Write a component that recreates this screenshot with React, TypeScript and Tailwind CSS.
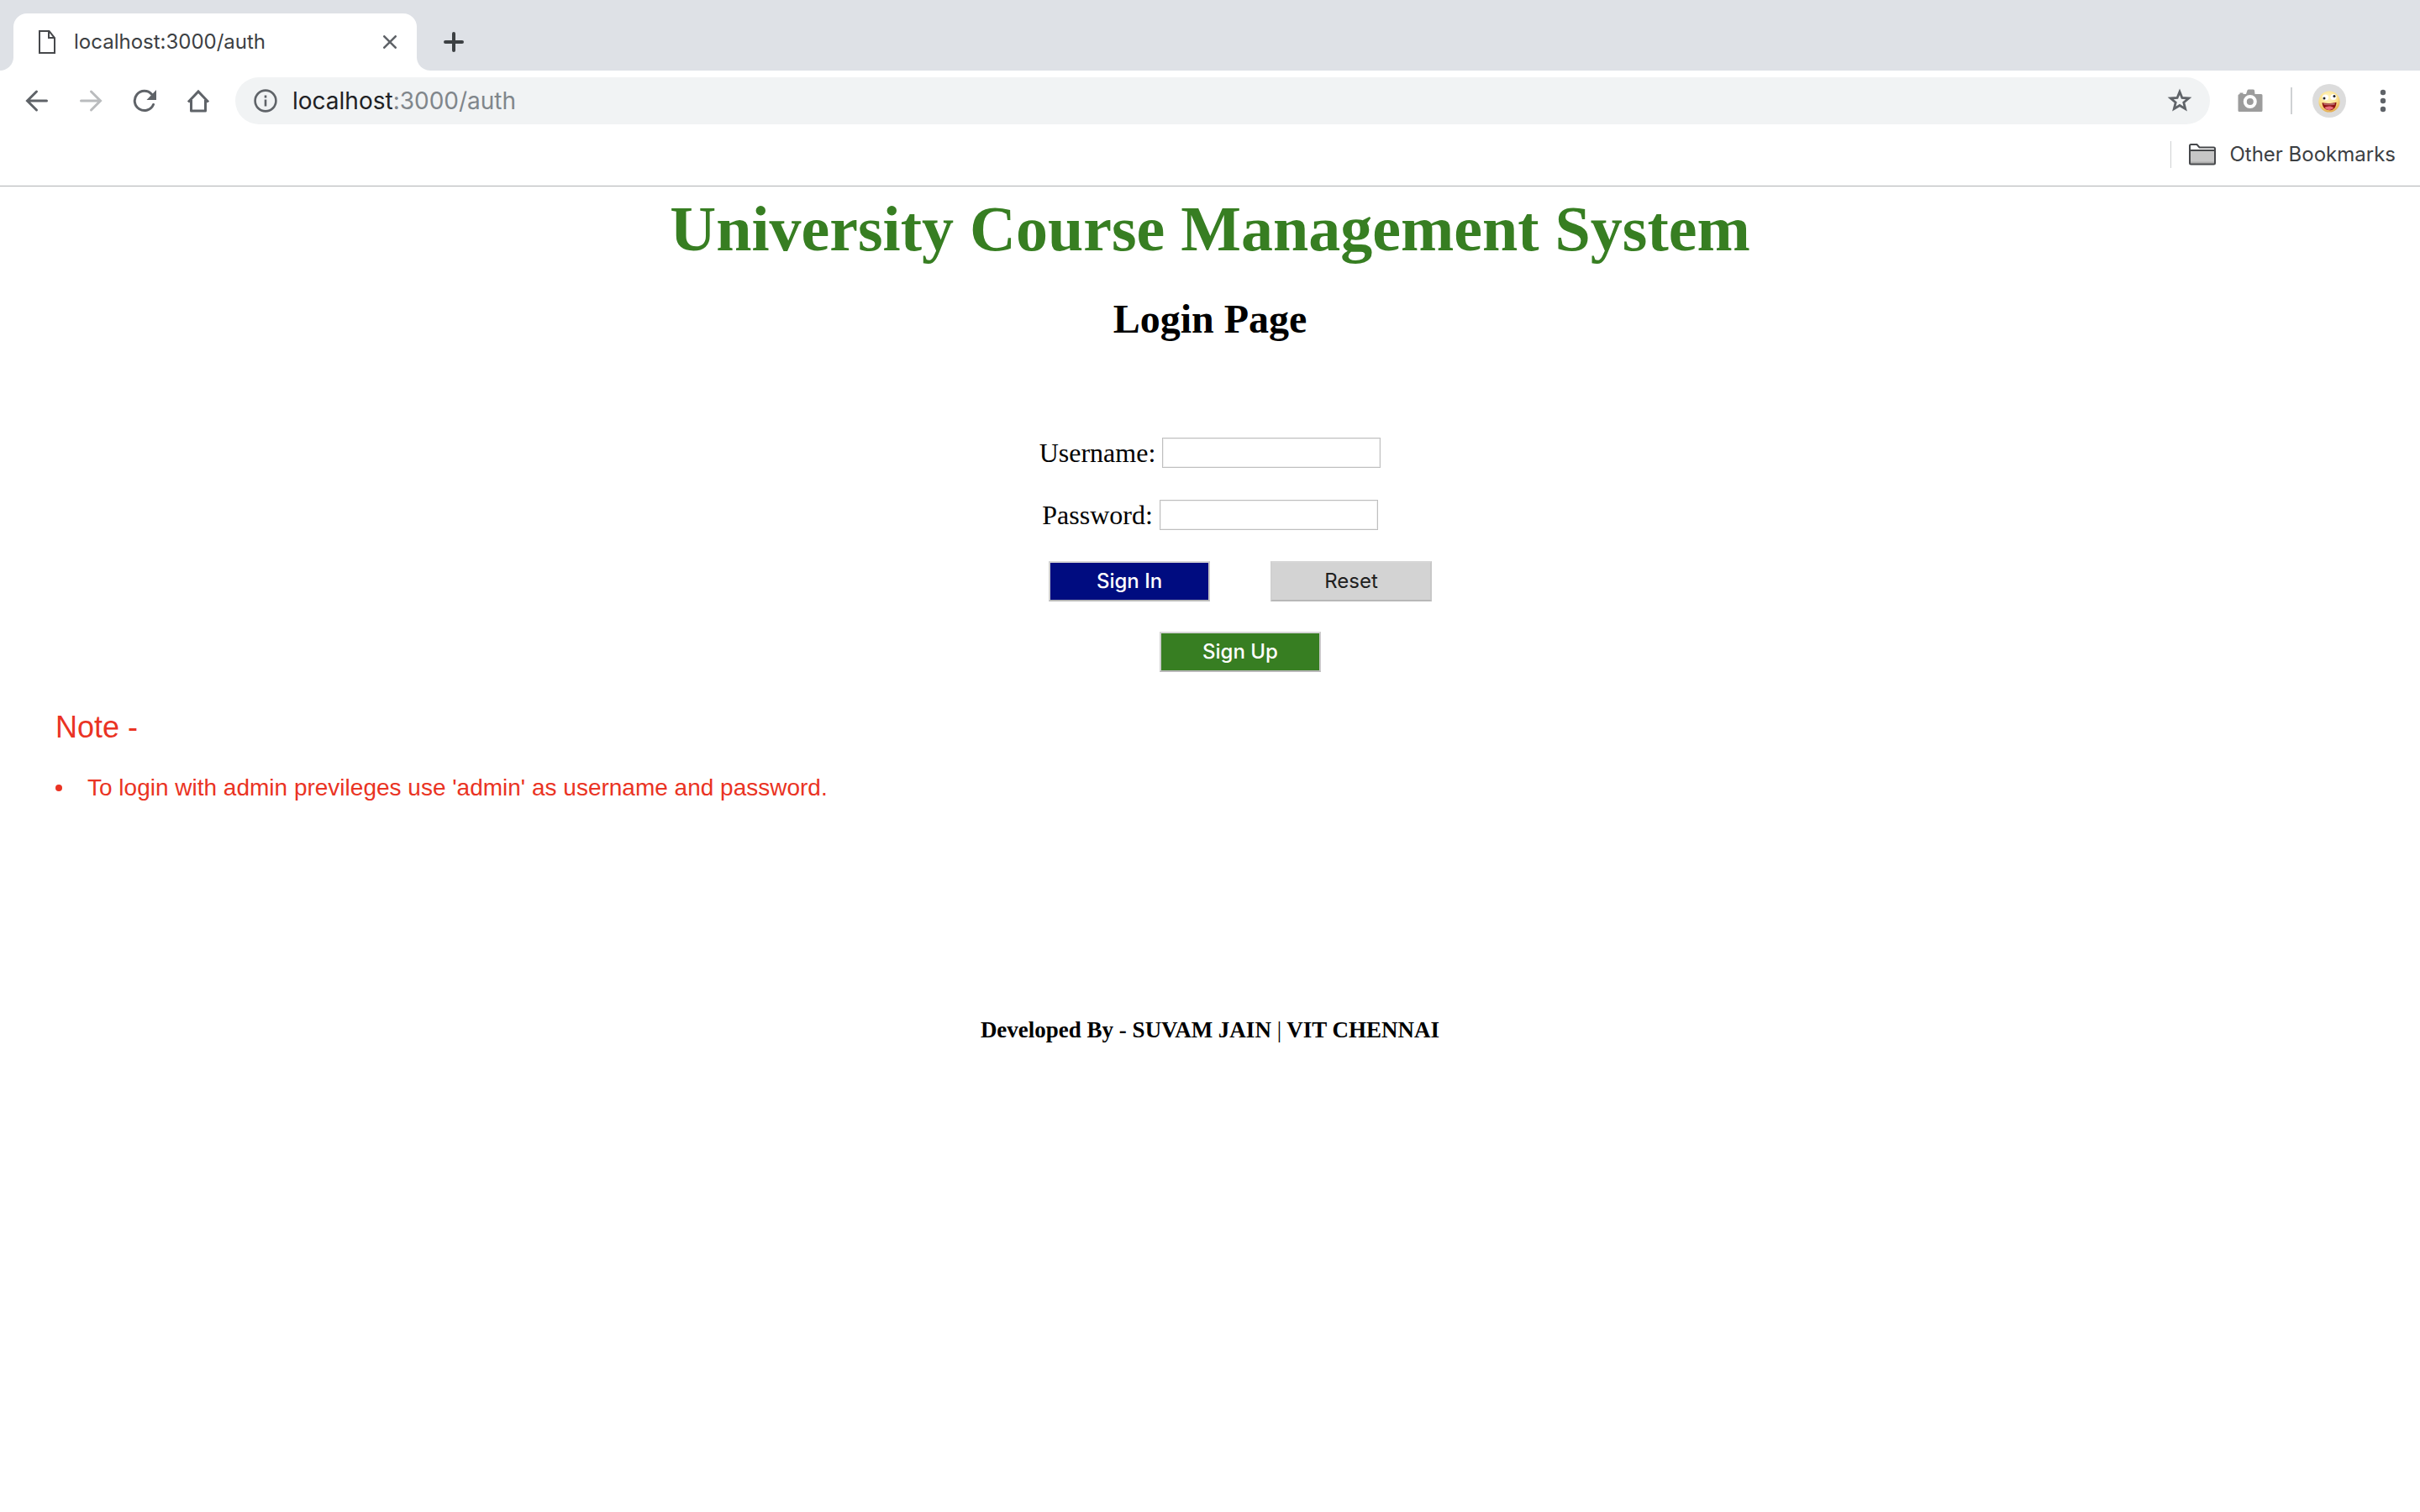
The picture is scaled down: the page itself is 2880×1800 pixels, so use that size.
import React from "react";

const INTER = "font-['Inter',sans-serif]";

function TabStrip() {
  return (
    <div className="flex h-[84px] items-end bg-[#dee1e6] pl-4">
      <div className="relative flex h-[68px] w-[480px] items-center rounded-t-2xl bg-white pr-6 pl-[30px]">
        <span className="absolute bottom-0 -left-4 size-4 bg-white">
          <span className="block size-4 rounded-br-2xl bg-[#dee1e6]" />
        </span>
        <span className="absolute -right-4 bottom-0 size-4 bg-white">
          <span className="block size-4 rounded-bl-2xl bg-[#dee1e6]" />
        </span>
        <svg className="h-7 w-5 shrink-0" viewBox="0 0 20 28" fill="none" stroke="#46484b" strokeWidth="2">
          <path d="M1 1h11.5L19 9v18H1z" />
          <path d="M12 1v8h7" />
        </svg>
        <span className="ml-[22px] flex-1 text-[24px] leading-8 text-[#3c4043]">localhost:3000/auth</span>
        <button type="button" aria-label="Close tab">
          <svg className="size-4" viewBox="0 0 16 16" stroke="#5f6368" strokeWidth="2.6" strokeLinecap="round">
            <path d="M1.3 1.3l13.4 13.4M14.7 1.3L1.3 14.7" />
          </svg>
        </button>
      </div>
      <button type="button" aria-label="New tab" className="mb-[22px] ml-8">
        <svg className="size-6" viewBox="0 0 24 24" stroke="#3c4043" strokeWidth="4" strokeLinecap="round">
          <path d="M12 2v20M2 12h20" />
        </svg>
      </button>
    </div>
  );
}

function Avatar() {
  return (
    <svg className="size-10" viewBox="0 0 40 40">
      <defs>
        <radialGradient id="face" cx="0.45" cy="0.3" r="0.75">
          <stop offset="0" stopColor="#fff6c4" />
          <stop offset="0.6" stopColor="#fbe08a" />
          <stop offset="1" stopColor="#e0a040" />
        </radialGradient>
      </defs>
      <circle cx="20" cy="20" r="20" fill="#dcdcdc" />
      <circle cx="20" cy="21" r="12.6" fill="url(#face)" />
      <circle cx="15.5" cy="16" r="3.6" fill="#fff" />
      <circle cx="25" cy="15.5" r="3.6" fill="#fff" />
      <circle cx="14" cy="17" r="1.5" fill="#222" />
      <circle cx="26" cy="14.5" r="1.5" fill="#222" />
      <path d="M11.5 22.300c5 .9 11.500.9 17-.6 0 5.600-3.300 9.600-8.300 9.600s-8.200-3.600-8.700-9z" fill="#8f1212" />
      <path d="M13 22.900c4.500.6 9.600.6 14-.4l-.5 2.300c-4 .7-9 .7-12.900 0z" fill="#fff" opacity=".35" />
      <path d="M14.500 28.500c2-2.400 8-2.800 10.800 0-2.800 3.200-8 3.400-10.800 0z" fill="#e8707c" />
    </svg>
  );
}

function Toolbar() {
  return (
    <div className="flex h-[72px] items-center bg-white pr-10 pl-[30px]">
      <button type="button" aria-label="Back" className="mr-9">
        <svg className="size-7" viewBox="0 0 28 28" fill="none" stroke="#5f6368" strokeWidth="3" strokeLinecap="round">
          <path d="M25.500 14H3M13.500 3L2.500 14l11 11" />
        </svg>
      </button>
      <button type="button" aria-label="Forward" className="mr-9">
        <svg className="size-7" viewBox="0 0 28 28" fill="none" stroke="#babcbe" strokeWidth="3" strokeLinecap="round">
          <path d="M2.500 14H25M14.500 3l11 11-11 11" />
        </svg>
      </button>
      <button type="button" aria-label="Reload" className="mr-9">
        <svg className="size-7" viewBox="0 0 28 28" fill="none">
          <path d="M24.500 18.500A11.600 11.600 0 1 1 22.500 6.200" stroke="#5f6368" strokeWidth="3" strokeLinecap="round" />
          <path d="M28 1v12H16.500z" fill="#5f6368" />
        </svg>
      </button>
      <button type="button" aria-label="Home" className="mr-[30px]">
        <svg className="size-7" viewBox="0 0 28 28" fill="none" stroke="#5f6368" strokeWidth="3" strokeLinejoin="round">
          <path d="M2 15.500L14 3l12 12.500" strokeLinejoin="miter" />
          <path d="M5.500 13v13h17V13" />
        </svg>
      </button>
      <form className="flex h-14 flex-1 items-center rounded-full bg-[#f1f3f4] pr-[21px] pl-[22px]">
        <svg className="size-7" viewBox="0 0 28 28" fill="none" stroke="#5f6368" strokeWidth="2.6">
          <circle cx="14" cy="14" r="12.400" />
          <path d="M14 12.500v8M14 7.500v3" />
        </svg>
        <span className="ml-[18px] flex-1 text-[28px] leading-9 text-[#80868b]">
          <span className="text-[#202124]">localhost</span>:3000/auth
        </span>
        <button type="button" aria-label="Bookmark this page">
          <svg className="size-[30px]" viewBox="0 0 30 30" fill="none" stroke="#5f6368" strokeWidth="2.800">
            <path d="M15 4.200l2.900 7.200 7.900.6-6 5 1.900 7.600-6.700-4.100-6.700 4.100 1.900-7.600-6-5 7.900-.6z" />
          </svg>
        </button>
      </form>
      <button type="button" aria-label="Screenshot extension" className="ml-[33px]">
        <svg className="h-7 w-[30px]" viewBox="0 0 30 28">
          <path d="M2.500 6V4.500h4V6H10l1.500-4.500Q12 .5 13 .5h5.500q1 0 1.500 1L20.500 6h7.500q1.500 0 1.500 1.500v18Q29.500 27 28 27H2Q.5 27 .5 25.500v-18Q.5 6 2.500 6z" fill="#9c9c9c" />
          <circle cx="14.800" cy="15" r="6" fill="none" stroke="#fff" strokeWidth="4" />
        </svg>
      </button>
      <span className="ml-[33px] h-8 w-0.5 bg-[#cfd1d3]" />
      <button type="button" aria-label="Profile" className="ml-6">
        <Avatar />
      </button>
      <button type="button" aria-label="Menu" className="ml-10">
        <svg className="h-7 w-2" viewBox="0 0 8 28" fill="#5f6368">
          <circle cx="4" cy="4" r="3.200" />
          <circle cx="4" cy="14" r="3.200" />
          <circle cx="4" cy="24" r="3.200" />
        </svg>
      </button>
    </div>
  );
}

function BookmarksBar() {
  return (
    <div className="flex h-[66px] items-center justify-end border-b border-[#b0b2b4] bg-white pr-[29px] pb-2.5">
      <span className="h-8 w-px bg-[#cfd1d3]" />
      <button type="button" className="ml-[21px] flex items-center gap-4 text-[24px] leading-8 text-[#3c4043]">
        <svg className="h-[26px] w-8" viewBox="0 0 32 26" fill="none" stroke="#46484b" strokeWidth="2">
          <path d="M1 8h30v15q0 1.500-1.500 1.500h-27Q1 24.500 1 23z" fill="#c6c6c6" stroke="none" />
          <path d="M2 22.500h28" stroke="#aeaeae" />
          <path d="M1 8V2.500Q1 1 2.500 1h7l3 3.500h17Q31 4.500 31 6v17q0 1.500-1.500 1.500h-27Q1 24.500 1 23zM1 8h30" />
        </svg>
        Other Bookmarks
      </button>
    </div>
  );
}

const fieldClass =
  "h-9 w-[260px] border border-[#bfbfbf] bg-white px-1 text-[24px] shadow-[inset_0_0_0_1px_#f0f0f0] outline-none";
const buttonClass =
  "ml-[72px] flex h-12 w-48 items-center justify-center border-2 border-t-[#d6d6d6] border-r-[#c8c8c8] border-b-[#b8b8b8] border-l-[#d0d0d0] font-['Inter',sans-serif] text-[24px] leading-8";

function LoginForm() {
  return (
    <form className="flex flex-col items-center text-[32px] leading-9 text-black">
      <div className="flex h-9 items-center gap-2">
        <label htmlFor="username">Username:</label>
        <input id="username" type="text" className={fieldClass} />
      </div>
      <div className="mt-[38px] flex h-9 items-center gap-2">
        <label htmlFor="password">Password:</label>
        <input id="password" type="password" className={fieldClass} />
      </div>
      <div className="mt-[37px] flex">
        <button type="button" className={`${buttonClass} bg-[#000c80] font-medium text-white`}>
          Sign In
        </button>
        <button type="reset" className={`${buttonClass} bg-[#d3d3d3] text-[#202020]`}>
          Reset
        </button>
      </div>
      <div className="mt-9 flex">
        <button type="button" className={`${buttonClass} bg-[#377e22] font-medium text-white`}>
          Sign Up
        </button>
      </div>
    </form>
  );
}

export default function App() {
  return (
    <div className="min-h-screen bg-white font-['Liberation_Serif',serif]">
      <header className={INTER}>
        <TabStrip />
        <Toolbar />
        <BookmarksBar />
      </header>
      <main>
        <h1 className="mt-2.5 text-center font-['Georgia','Liberation_Serif',serif] text-[76px] leading-20 font-bold text-[#377e22]">
          University Course Management System
        </h1>
        <h2 className="mt-10 mb-[113px] text-center text-[48px] leading-14 font-bold text-black">Login Page</h2>
        <LoginForm />
        <section className="mt-11 pl-[66px] font-['Liberation_Sans',sans-serif] text-[#ea3323]">
          <h3 className="text-[36px] leading-11">Note -</h3>
          <ul className="mt-8">
            <li className="flex items-center text-[28px] leading-9">
              <span className="mr-[30px] size-2 rounded-full bg-[#ea3323]" />
              To login with admin previleges use 'admin' as username and password.
            </li>
          </ul>
        </section>
      </main>
      <footer className="mt-[254px] text-center text-[27px] leading-8 font-bold text-black">
        Developed By - SUVAM JAIN <span className="font-normal">|</span> VIT CHENNAI
      </footer>
    </div>
  );
}
